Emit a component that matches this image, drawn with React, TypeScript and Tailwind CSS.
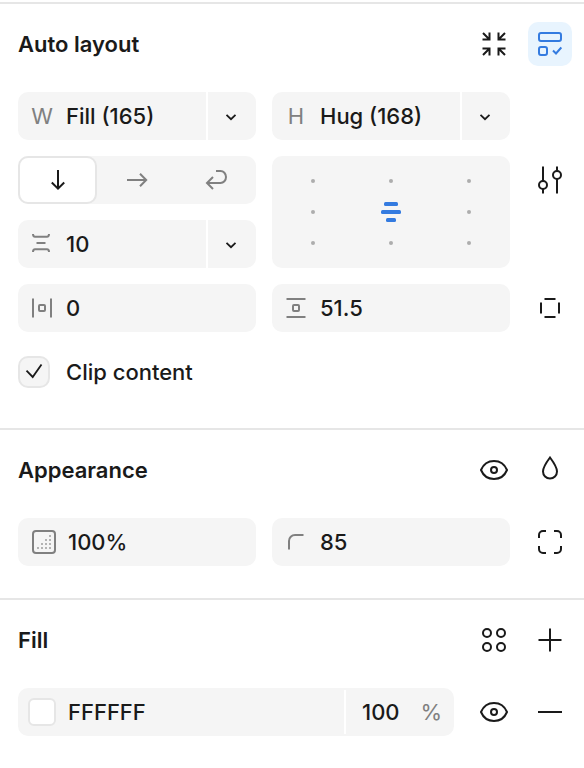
import { useState } from "react";
import type { ReactNode } from "react";

const alignments = [
  "Top left",
  "Top center",
  "Top right",
  "Left",
  "Center",
  "Right",
  "Bottom left",
  "Bottom center",
  "Bottom right",
];

function Icon({
  size = 24,
  stroke = 2,
  children,
}: {
  size?: number;
  stroke?: number;
  children: ReactNode;
}) {
  return (
    <svg
      width={size}
      height={size}
      viewBox={`0 0 ${size} ${size}`}
      fill="none"
      stroke="currentColor"
      strokeWidth={stroke}
      className="shrink-0"
      aria-hidden="true"
    >
      {children}
    </svg>
  );
}

function EyeIcon() {
  return (
    <Icon size={28}>
      <path d="M1 14C3.500 8 8.300 5 14 5s10.500 3 13 9c-2.500 6-7.300 9-13 9S3.500 20 1 14z" />
      <circle cx="14" cy="14" r="3" />
    </Icon>
  );
}

function IconButton({
  label,
  active = false,
  children,
}: {
  label: string;
  active?: boolean;
  children: ReactNode;
}) {
  return (
    <button
      type="button"
      aria-label={label}
      className={`flex size-11 shrink-0 items-center justify-center rounded-[10px] ${
        active ? "bg-[#e8f4fe] text-[#347be0]" : "hover:bg-neutral-100"
      }`}
    >
      {children}
    </button>
  );
}

function Section({
  title,
  actions,
  children,
}: {
  title: string;
  actions: ReactNode;
  children: ReactNode;
}) {
  return (
    <section className="border-t-2 border-[#e6e6e6] pt-[18px] pr-3 pb-8 pl-[18px]">
      <div className="mb-[26px] flex items-center justify-between">
        <h2 className="font-semibold">{title}</h2>
        <div className="flex gap-3">{actions}</div>
      </div>
      {children}
    </section>
  );
}

function Field({
  label,
  icon,
  value,
  menu = false,
  wide = false,
}: {
  label: string;
  icon: ReactNode;
  value: string;
  menu?: boolean;
  wide?: boolean;
}) {
  return (
    <div className="flex h-12 min-w-0 gap-0.5 overflow-hidden rounded-[10px]">
      <label
        className={`flex min-w-0 flex-1 items-center gap-3 bg-[#f5f5f5] ${
          wide ? "pl-[14px]" : "pl-3"
        }`}
      >
        <span className="flex w-6 shrink-0 justify-center font-normal text-[#808080]">
          {icon}
        </span>
        <input
          type="text"
          aria-label={label}
          defaultValue={value}
          className="w-full min-w-0 bg-transparent outline-none"
        />
      </label>
      {menu && (
        <button
          type="button"
          aria-label={`${label} options`}
          className="flex w-12 shrink-0 items-center justify-center bg-[#f5f5f5]"
        >
          <Icon stroke={1.8}>
            <path d="M6.500 10.800l4.500 4.400 4.500-4.400" />
          </Icon>
        </button>
      )}
    </div>
  );
}

function DirectionControl() {
  const [direction, setDirection] = useState("Vertical");
  const options = [
    { name: "Vertical", icon: <path d="M11 1v18.500M4.800 13.500l6.200 6.200 6.200-6.200" /> },
    { name: "Horizontal", icon: <path d="M1 11h19.500M14 4.800l6.200 6.200-6.200 6.200" /> },
    { name: "Wrap", icon: <path d="M11 2h4.500a5.500 6 0 0 1 0 12H2M8 8l-6 6 6 6" /> },
  ];

  return (
    <div className="grid h-12 grid-cols-3 rounded-[10px] bg-[#f5f5f5]">
      {options.map((option) => (
        <button
          key={option.name}
          type="button"
          aria-label={option.name}
          aria-pressed={direction === option.name}
          onClick={() => setDirection(option.name)}
          className={`flex items-center justify-center rounded-[10px] ${
            direction === option.name
              ? "border-2 border-[#e6e6e6] bg-white"
              : "text-[#808080]"
          }`}
        >
          <Icon size={22}>{option.icon}</Icon>
        </button>
      ))}
    </div>
  );
}

function AlignmentGrid() {
  const [selected, setSelected] = useState("Center");

  return (
    <div className="row-span-2 grid grid-cols-3 grid-rows-3 rounded-[10px] bg-[#f5f5f5] px-0.5 py-[9px]">
      {alignments.map((name) => (
        <button
          key={name}
          type="button"
          aria-label={name}
          aria-pressed={selected === name}
          onClick={() => setSelected(name)}
          className="flex items-center justify-center"
        >
          {selected === name ? (
            <svg width="20" height="20" viewBox="0 0 20 20" fill="#347be0" aria-hidden="true">
              <rect x="3" y="0" width="14" height="4" rx="1.500" />
              <rect x="0" y="8" width="20" height="4" rx="1.500" />
              <rect x="5" y="16" width="10" height="4" rx="1.500" />
            </svg>
          ) : (
            <span className="size-1 rounded-full bg-[#adadad]" />
          )}
        </button>
      ))}
    </div>
  );
}

export default function App() {
  const [clip, setClip] = useState(true);

  return (
    <main className="min-h-screen bg-white pt-0.5 font-['Inter',sans-serif] text-[22px] leading-8 font-[450] text-[#1a1a1a]">
      {/* Auto layout */}
      <Section
        title="Auto layout"
        actions={
          <>
            <IconButton label="Resize to fit">
              <Icon>
                <path d="M1 1l6 6M7.500 .5v7H.5" />
                <path d="M23 1l-6 6M16.500 .5v7h7" />
                <path d="M1 23l6-6M7.500 23.500v-7H.5" />
                <path d="M23 23l-6-6M16.500 23.500v-7h7" />
              </Icon>
            </IconButton>
            <IconButton label="Use auto layout" active>
              <Icon>
                <rect x="1" y="1" width="22" height="8" rx="2" />
                <rect x="1" y="15" width="8" height="8" rx="2" />
                <path d="M15 18.500l3 3 5.300-6" />
              </Icon>
            </IconButton>
          </>
        }
      >
        <div className="grid grid-cols-[1fr_1fr_46px] gap-4">
          <Field label="Width" icon="W" value="Fill (165)" menu />
          <Field label="Height" icon="H" value="Hug (168)" menu />
          <span />

          <DirectionControl />
          <AlignmentGrid />
          <div className="row-span-2 flex justify-end pt-0.5">
            <IconButton label="Auto layout settings">
              <Icon size={28}>
                <path d="M7 .5V15M7 23v4.500M21 .5V5M21 13v14.500" />
                <circle cx="7" cy="19" r="4" />
                <circle cx="21" cy="9" r="4" />
              </Icon>
            </IconButton>
          </div>
          <Field
            label="Gap"
            value="10"
            menu
            icon={
              <Icon>
                <path d="M3 2c0 2 .5 2.700 2 2.700h12c1.500 0 2-.7 2-2.700M6.500 11h9M3 20c0-2 .5-2.700 2-2.700h12c1.500 0 2 .7 2 2.700" />
              </Icon>
            }
          />

          <Field
            label="Horizontal padding"
            value="0"
            icon={
              <Icon>
                <path d="M3 2.500v19M21 2.500v19" />
                <rect x="9" y="9" width="6" height="6" rx="1" />
              </Icon>
            }
          />
          <Field
            label="Vertical padding"
            value="51.5"
            icon={
              <Icon>
                <path d="M2.500 3h19M2.500 21h19" />
                <rect x="9" y="9" width="6" height="6" rx="1" />
              </Icon>
            }
          />
          <div className="flex items-center justify-end">
            <IconButton label="Individual padding">
              <Icon>
                <path d="M3 6.500v11M21 6.500v11M6.500 3h11M6.500 21h11" />
              </Icon>
            </IconButton>
          </div>

          <label className="flex h-12 items-center gap-4">
            <span className="relative size-8">
              <input
                type="checkbox"
                checked={clip}
                onChange={(e) => setClip(e.target.checked)}
                className="block size-8 appearance-none rounded-[10px] border-2 border-[#e6e6e6] bg-[#f5f5f5]"
              />
              {clip && (
                <span className="pointer-events-none absolute inset-0">
                  <Icon size={32} stroke={1.8}>
                    <path d="M8.500 14.700l6.200 6.300 8.800-12.500" />
                  </Icon>
                </span>
              )}
            </span>
            Clip content
          </label>
        </div>
      </Section>

      {/* Appearance */}
      <Section
        title="Appearance"
        actions={
          <>
            <IconButton label="Toggle layer visibility">
              <EyeIcon />
            </IconButton>
            <IconButton label="Blend mode">
              <Icon size={28}>
                <path d="M14 1.500C11 5.500 7 11 7 15.500a7 7 0 0 0 14 0C21 11 17 5.500 14 1.500z" />
              </Icon>
            </IconButton>
          </>
        }
      >
        <div className="grid grid-cols-[1fr_1fr_46px] gap-4">
          <Field
            label="Opacity"
            value="100%"
            wide
            icon={
              <Icon>
                <rect x="1" y="1" width="22" height="22" rx="3" />
                <path
                  d="M17 6h2M13 10h2m2 0h2M9 14h2m2 0h2m2 0h2M5 18h2m2 0h2m2 0h2m2 0h2"
                  stroke="#b3b3b3"
                />
              </Icon>
            }
          />
          <Field
            label="Corner radius"
            value="85"
            icon={
              <Icon>
                <path d="M5 19.500V11a6 6 0 0 1 6-6h8.500" />
              </Icon>
            }
          />
          <div className="flex items-center justify-end">
            <IconButton label="Individual corners">
              <Icon>
                <path d="M1 8V5a4 4 0 0 1 4-4h3M16 1h3a4 4 0 0 1 4 4v3M23 16v3a4 4 0 0 1-4 4h-3M8 23H5a4 4 0 0 1-4-4v-3" />
              </Icon>
            </IconButton>
          </div>
        </div>
      </Section>

      {/* Fill */}
      <Section
        title="Fill"
        actions={
          <>
            <IconButton label="Apply styles">
              <Icon>
                <circle cx="5" cy="5" r="4" />
                <circle cx="19" cy="5" r="4" />
                <circle cx="5" cy="19" r="4" />
                <circle cx="19" cy="19" r="4" />
              </Icon>
            </IconButton>
            <IconButton label="Add fill">
              <Icon>
                <path d="M12 .5v23M.5 12h23" />
              </Icon>
            </IconButton>
          </>
        }
      >
        <div className="flex items-center gap-[18px]">
          <div className="flex h-12 min-w-0 flex-1 items-center rounded-[10px] bg-[#f5f5f5] pl-[10px]">
            <button
              type="button"
              aria-label="Pick color"
              className="size-7 shrink-0 rounded-md border-2 border-[#e6e6e6] bg-white"
            />
            <input
              type="text"
              aria-label="Hex color"
              defaultValue="FFFFFF"
              className="ml-3 w-full min-w-0 flex-1 bg-transparent outline-none"
            />
            <label className="flex h-11 w-[110px] shrink-0 items-center justify-between border-l-2 border-white pr-3 pl-4">
              <input
                type="text"
                aria-label="Fill opacity"
                defaultValue="100"
                className="w-12 bg-transparent outline-none"
              />
              <span className="font-normal text-[#808080]">%</span>
            </label>
          </div>
          <div className="flex gap-3">
            <IconButton label="Toggle fill visibility">
              <EyeIcon />
            </IconButton>
            <IconButton label="Remove fill">
              <Icon>
                <path d="M0 12h24" />
              </Icon>
            </IconButton>
          </div>
        </div>
      </Section>
    </main>
  );
}
